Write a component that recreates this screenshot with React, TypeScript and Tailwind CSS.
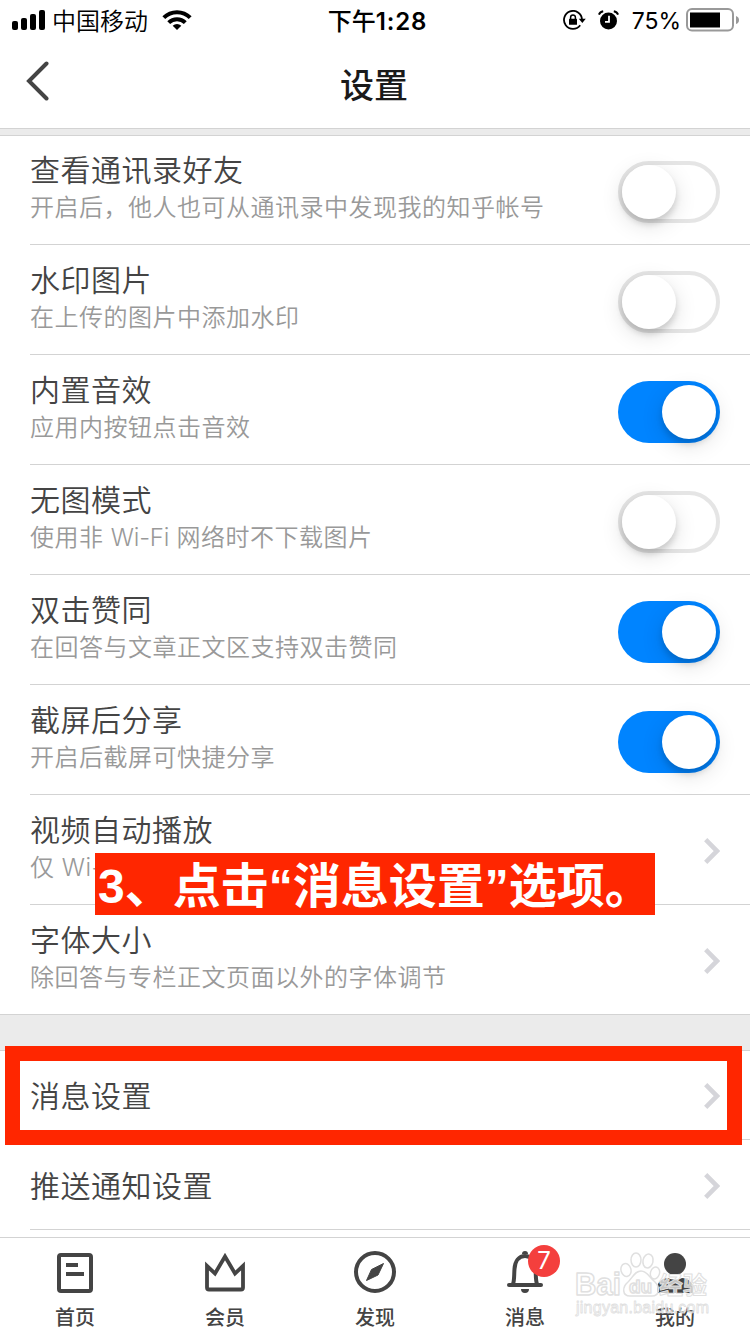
import type { ReactNode } from "react";

type Setting = {
  title: string;
  desc: ReactNode;
  on?: boolean;
  link?: boolean;
};

const settings: Setting[] = [
  { title: "查看通讯录好友", desc: "开启后，他人也可从通讯录中发现我的知乎帐号", on: false },
  { title: "水印图片", desc: "在上传的图片中添加水印", on: false },
  { title: "内置音效", desc: "应用内按钮点击音效", on: true },
  {
    title: "无图模式",
    desc: (
      <>
        使用非 <span className="tracking-[-0.2px]">Wi-Fi</span> 网络时不下载图片
      </>
    ),
    on: false,
  },
  { title: "双击赞同", desc: "在回答与文章正文区支持双击赞同", on: true },
  { title: "截屏后分享", desc: "开启后截屏可快捷分享", on: true },
  { title: "视频自动播放", desc: "仅 Wi-", link: true },
  { title: "字体大小", desc: "除回答与专栏正文页面以外的字体调节", link: true },
];

const Toggle = ({ on }: { on: boolean }) => (
  <div
    className={
      on
        ? "flex h-[62px] w-[102px] justify-end rounded-full bg-[#0084ff] p-1"
        : "flex h-[62px] w-[102px] rounded-full border-4 border-[#e5e5e5] bg-white"
    }
  >
    <div className="size-[54px] rounded-full bg-white shadow-[0_5px_6px_rgba(0,0,0,0.14),0_6px_22px_rgba(0,0,0,0.13)]" />
  </div>
);

const Chevron = () => (
  <svg className="h-[26px] w-4" viewBox="0 0 16 26" fill="none" stroke="#d5d5da" strokeWidth="4.6">
    <path d="M1.7 1.7 13 13 1.7 24.3" />
  </svg>
);

const StatusBar = () => (
  <div className="flex h-10 items-center justify-between pr-[11px] pl-3 text-black">
    <div className="flex w-[280px] items-center">
      <svg width="34" height="20" viewBox="0 0 34 20">
        <rect x="0" y="11" width="6" height="9" rx="2" />
        <rect x="9" y="8" width="6" height="12" rx="2" />
        <rect x="18" y="4" width="6" height="16" rx="2" />
        <rect x="27" y="0" width="6" height="20" rx="2" />
      </svg>
      <span className="ml-1.5 pt-[3px] text-2xl leading-10 font-[350]">中国移动</span>
      <svg className="ml-3.5" width="30" height="20" viewBox="0 0 30 20" fill="none" stroke="#000" strokeWidth="4">
        <path d="M1.8 7.7a18.6 18.6 0 0 1 26.4 0" />
        <path d="M6.7 12.6a11.7 11.7 0 0 1 16.6 0" />
        <path d="M15 20l-4.3-4.3a6.2 6.2 0 0 1 8.6 0z" fill="#000" stroke="none" />
      </svg>
    </div>
    <div className="w-[110px] pt-[3px] pl-1 text-center text-2xl leading-10 font-medium whitespace-nowrap">
      下午<span className="font-semibold tracking-[0.8px]">1:28</span>
    </div>
    <div className="flex w-[280px] items-center justify-end">
      <svg width="23" height="20" viewBox="0 0 23 20" fill="none" stroke="#000" strokeWidth="1.8">
        <path d="M17.2 15.3A9 9 0 1 1 19 9.5" />
        <path d="M15.8 8.8h7L19.3 13z" fill="#000" stroke="none" />
        <rect x="6" y="8.8" width="8" height="6" rx="0.6" fill="#000" stroke="none" />
        <path d="M7.6 9V7.3a2.4 2.4 0 0 1 4.8 0V9" strokeWidth="1.5" />
      </svg>
      <svg className="ml-3" width="21" height="20" viewBox="0 0 21 20">
        <circle cx="10.5" cy="11" r="8.5" />
        <path d="M.9 4.7Q2 1.8 5.2 1.2M20.1 4.7Q19 1.8 15.8 1.2" fill="none" stroke="#000" strokeWidth="2" />
        <path d="M11 5.8v6H7" fill="none" stroke="#fff" strokeWidth="1.8" />
      </svg>
      <span className="ml-[13px] pt-0.5 text-[23px] leading-10">75%</span>
      <svg className="ml-[5px]" width="53" height="24" viewBox="0 0 53 24">
        <rect x="1" y="1" width="46" height="21.5" rx="5" fill="none" stroke="#999" strokeWidth="2" />
        <rect x="4" y="4.5" width="30" height="15" />
        <path d="M50 8q3 1 3 4t-3 4z" fill="#999" />
      </svg>
    </div>
  </div>
);

const SettingRow = ({ title, desc, on, link }: Setting) => (
  <div className="h-[110px] pl-[30px]">
    <div className="flex h-full justify-between border-b border-[#d3d3d3] pt-[15px] pr-[30px]">
      <div>
        <div className="text-[30px] leading-10 font-[350] tracking-[0.5px] text-[#444]">{title}</div>
        <div className="text-2xl leading-9 font-[350] tracking-[0.5px] text-[#999]">{desc}</div>
      </div>
      <div className={link ? "pt-7" : "pt-[11px]"}>{link ? <Chevron /> : <Toggle on={!!on} />}</div>
    </div>
  </div>
);

const LinkRow = ({ title }: { title: string }) => (
  <div className="h-[90px] pl-[30px]">
    <div className="flex h-full items-center justify-between border-b border-[#d3d3d3] pt-0.5 pr-[30px]">
      <span className="text-[30px] leading-10 font-[350] tracking-[0.5px] text-[#444]">{title}</span>
      <Chevron />
    </div>
  </div>
);

const Tab = ({ label, children }: { label: string; children: ReactNode }) => (
  <div className="relative flex w-[150px] flex-col items-center pt-[11px]">
    <svg width="48" height="48" viewBox="0 0 48 48" fill="none" stroke="#444" strokeWidth="4">
      {children}
    </svg>
    <span className="mt-[6px] text-xl leading-[30px] font-medium text-[#444]">{label}</span>
    {label === "消息" && (
      <span className="absolute top-[7px] left-[78px] flex size-8 items-center justify-center rounded-full bg-[#f43f3d] text-2xl text-white">
        7
      </span>
    )}
  </div>
);

const Watermark = () => (
  <svg
    className="absolute top-[1248px] left-[572px]"
    width="142"
    height="76"
    viewBox="0 0 142 76"
    fill="#fff"
    fillOpacity="0.7"
    stroke="#e0e0e0"
    strokeWidth="1.5"
    strokeLinejoin="round"
  >
    <ellipse cx="54" cy="22" rx="5" ry="6.500" transform="rotate(-15 54 22)" />
    <ellipse cx="64" cy="12" rx="5" ry="7" />
    <ellipse cx="76" cy="13" rx="5" ry="7" transform="rotate(12 76 13)" />
    <ellipse cx="83" cy="25" rx="4.500" ry="6" transform="rotate(18 83 25)" />
    <path d="M69 23c-6 0-8 6-13 11-6 5-6 14 2 14h22c8 0 8-9 3-14-6-5-8-11-14-11z" />
    <text x="3" y="47" fontSize="32" fontWeight="700" fontFamily="Liberation Sans" textLength="46" lengthAdjust="spacingAndGlyphs">
      Bai
    </text>
    <text x="57" y="45" fontSize="19" fontWeight="700" fontFamily="Liberation Sans">
      du
    </text>
    <text x="87" y="46" fontSize="24" fontWeight="700" strokeWidth="1">
      经验
    </text>
    <text x="4" y="65" fontSize="16" fontFamily="Liberation Sans" strokeWidth="0.8" fillOpacity="0.4" textLength="133">
      jingyan.baidu.com
    </text>
  </svg>
);

const App = () => {
  return (
    <div className="relative flex h-[1334px] w-[750px] flex-col overflow-hidden bg-white font-['Inter','Noto_Sans_CJK_SC',sans-serif]">
      <StatusBar />

      {/* Nav bar */}
      <div className="flex h-[88px] items-center px-[26px] pb-[7px]">
        <svg width="24" height="40" viewBox="0 0 24 40" fill="none" stroke="#444" strokeWidth="4" strokeLinecap="round">
          <path d="M20.5 2.5 3 20l17.5 17.5" />
        </svg>
        <h1 className="mt-[11px] flex-1 pr-[26px] text-center text-[34px] leading-10 font-medium text-[#1a1a1a]">
          设置
        </h1>
      </div>

      <div className="h-2 border-y border-[#d3d3d3] bg-[#ebebeb]" />

      <div className="-mt-px">
        {settings.map((item) => (
          <SettingRow key={item.title} {...item} />
        ))}
      </div>

      <div className="-mt-px h-[37px] border-y border-[#d3d3d3] bg-[#ebebeb]" />

      <div className="-mt-px">
        <div className="relative">
          <LinkRow title="消息设置" />
          <div className="absolute -top-1 left-[5px] h-[99px] w-[737px] border-[15px] border-[#ff2600]" />
        </div>
        <LinkRow title="推送通知设置" />
      </div>

      {/* Tab bar */}
      <div className="mt-[7px] flex h-[97px] border-t border-[#d3d3d3]">
        <Tab label="首页">
          <rect x="8" y="6" width="32" height="36" rx="2" />
          <path d="M15 16h12M15 25h18" />
        </Tab>
        <Tab label="会员">
          <path d="M6 17v21.5a2 2 0 0 0 2 2h32a2 2 0 0 0 2-2V17l-8 7.5L24 7.5 14 24.5z" strokeWidth="3.8" />
        </Tab>
        <Tab label="发现">
          <circle cx="24" cy="23" r="19" />
          <path d="M32.5 14.5 27 26 15.500 31.500 20.500 20.500z" fill="#444" strokeWidth="1" strokeLinejoin="round" />
        </Tab>
        <Tab label="消息">
          <path d="M12 35c1.500-4 1-9 1.500-15C14 12 18 7 24 7s10 5 10.500 13c.5 6 0 11 1.500 15" />
          <path d="M8 36h32" strokeLinecap="round" />
          <path d="M20 40h8a4 4 0 0 1-8 0zM21 5a3 3 0 0 1 6 0z" fill="#444" stroke="none" />
        </Tab>
        <Tab label="我的">
          <circle cx="24" cy="15" r="11" fill="#444" stroke="none" />
          <path d="M6 44v-4c0-7 5-11 11-11 4 2 10 2 14 0 6 0 11 4 11 11v4z" fill="#444" stroke="none" />
        </Tab>
      </div>

      <Watermark />

      <div className="absolute top-[853px] left-[95px] h-[62px] w-[560px] bg-[#ff2600] pt-[3px] pl-[3px] font-['Liberation_Sans','Noto_Sans_CJK_SC',sans-serif] text-5xl leading-[62px] font-bold whitespace-nowrap text-white">
        3、点击“消息设置”选项。
      </div>
    </div>
  );
};

export default App;
